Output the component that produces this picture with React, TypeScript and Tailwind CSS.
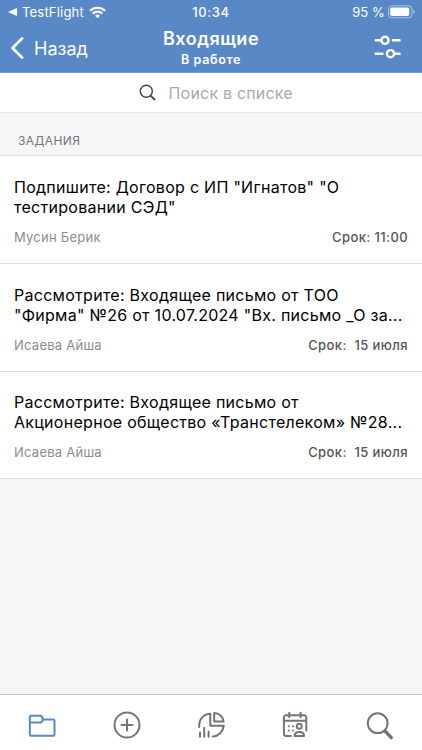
import { clsx } from 'clsx';

interface Task {
  lines: string[];
  author: string;
  due: string;
}

const tasks: Task[] = [
  { lines: ['Подпишите: Договор с ИП "Игнатов" "О', 'тестировании СЭД"'], author: 'Мусин Берик', due: 'Срок: 11:00' },
  { lines: ['Рассмотрите: Входящее письмо от ТОО', '"Фирма" №26 от 10.07.2024 "Вх. письмо _О за...'], author: 'Исаева Айша', due: 'Срок:  15 июля' },
  { lines: ['Рассмотрите: Входящее письмо от', 'Акционерное общество «Транстелеком» №28...'], author: 'Исаева Айша', due: 'Срок:  15 июля' },
];

function StatusBar() {
  return (
    <div className="grid h-6 grid-cols-[1fr_auto_1fr] items-center px-[7px] text-[13px] leading-6">
      <div className="flex items-center">
        <svg width="10" height="10" viewBox="0 0 10 10" fill="currentColor">
          <path d="M1 5 10 1v8z" />
        </svg>
        <span className="ml-[5px] tracking-[0.2px]">TestFlight</span>
        <svg className="ml-[5px]" width="17" height="13" viewBox="0 0 17 13" fill="none" stroke="currentColor" strokeWidth="2.2">
          <path d="M1 4.8a10.7 10.7 0 0 1 15 0M3.7 7.6a6.8 6.8 0 0 1 9.6 0" />
          <path d="M8.5 12.2 6 9.7a3.6 3.6 0 0 1 5 0z" fill="currentColor" stroke="none" />
        </svg>
      </div>
      <span className="font-medium tracking-[0.6px]">10:34</span>
      <div className="flex items-center justify-end gap-[3px]">
        <span className="tracking-[0.1px]">95 %</span>
        <svg width="27" height="14" viewBox="0 0 27 14" fill="none">
          <rect x="0.5" y="0.8" width="23.5" height="12" rx="3.5" stroke="#fff" strokeOpacity="0.5" />
          <rect x="2.2" y="2.5" width="19" height="8.6" rx="1.8" fill="#fff" />
          <path d="M25.2 5v4c.9-.3 1.4-1.1 1.4-2s-.5-1.7-1.4-2z" fill="#fff" fillOpacity="0.5" />
        </svg>
      </div>
    </div>
  );
}

function NavBar() {
  return (
    <div className="grid h-12 grid-cols-[1fr_auto_1fr] px-[10px]">
      <button className="flex h-12 items-center gap-[10px] text-[18px]">
        <svg width="14" height="22" viewBox="0 0 14 22" fill="none" stroke="currentColor" strokeWidth="2.7" strokeLinecap="round" strokeLinejoin="round">
          <path d="M12 1.5 2.5 11 12 20.5" />
        </svg>
        <span>Назад</span>
      </button>
      <div className="flex flex-col items-center pt-1">
        <h1 className="text-[18px] font-semibold leading-[22px] tracking-[0.5px]">Входящие</h1>
        <p className="mt-[2px] text-[12.5px] font-semibold leading-4 tracking-[0.65px]">В работе</p>
      </div>
      <button className="flex h-[46px] items-center justify-end pr-[10px]">
        <svg width="29" height="24" viewBox="0 0 29 24" fill="none" stroke="currentColor" strokeWidth="2.4" strokeLinecap="round">
          <circle cx="12" cy="5.3" r="3.6" />
          <path d="M2.8 5.3h5.500M20 5.3h6.600M2.8 18.7h6.700M21.500 18.7h5.100" />
          <circle cx="17.5" cy="18.7" r="3.6" />
        </svg>
      </button>
    </div>
  );
}

function TaskRow({ task }: { task: Task }) {
  return (
    <li className="flex h-[108px] flex-col border-b border-[#dfdfe2] bg-white px-[14px] pt-[22px] last:h-[107px] last:pt-[21px]">
      <div className="whitespace-nowrap text-[16px] leading-[19.5px] tracking-[0.28px] text-black">
        {task.lines.map(line => (
          <p key={line}>{line}</p>
        ))}
      </div>
      <div className="mt-3 flex justify-between text-[13px] leading-4">
        <span className="tracking-[0.25px] text-[#8c8c8c]">{task.author}</span>
        <span className="whitespace-pre font-medium tracking-[0.4px] text-[#555]">{task.due}</span>
      </div>
    </li>
  );
}

const tabs = [
  {
    label: 'Папки',
    icon: <path d="M2.8 23.4V6a1.3 1.3 0 0 1 1.3-1.3H14l1.6 1.8v2H26.2a1.3 1.3 0 0 1 1.3 1.3v13.6a1.3 1.3 0 0 1-1.3 1.3H4.100a1.3 1.3 0 0 1-1.3-1.3zM2.8 11.500H14l1.600-1.800V8.500" />,
  },
  {
    label: 'Создать',
    icon: <path d="M15 1.5a12.5 12.5 0 1 0 0 25a12.5 12.5 0 1 0 0-25zM15 8.5v11M9.5 14h11" />,
  },
  {
    label: 'Отчёты',
    icon: (
      <>
        <path d="M3.2 16V14A11.3 11.3 0 0 1 14.3 2.8V14.8H27.700A11.800 11.800 0 0 1 16.700 25.500" />
        <path d="M18.200 2V10.500H27.600A9.400 9.400 0 0 0 18.200 2z" />
        <path d="M4 21.500v4.300M8.200 17v8.800M12.600 20.500v5.300" />
      </>
    ),
  },
  {
    label: 'Календарь',
    icon: (
      <>
        <path d="M10.800 25H6a2.100 2.100 0 0 1-2.100-2.100V6.400A2.100 2.100 0 0 1 6 4.300h18.200a2.100 2.100 0 0 1 2.100 2.100V19.500M3.900 9.700h22.400M9.300 1.700v4.500M20.600 1.700v4.500" />
        <circle cx="19.300" cy="15.200" r="2.500" />
        <path d="M14.600 25c0-2.600 1.800-4 4.700-4s4.700 1.400 4.700 4z" />
        <path d="M8.700 15.200h.1M13 15.200h.1M8.700 19.500h.1M13 19.500h.1" />
      </>
    ),
  },
  {
    label: 'Поиск',
    icon: (
      <>
        <circle cx="12.7" cy="12.2" r="9.9" />
        <path d="m20.300 20.400 6 6.200" strokeWidth="3.500" />
      </>
    ),
  },
];

export default function App() {
  return (
    <div className="flex h-[750px] w-[422px] flex-col overflow-hidden bg-[#f5f6f8] font-['Inter',sans-serif]">
      <header className="h-[73px] shrink-0 border-b border-[#719bcf] bg-[#5988c6] text-white">
        <StatusBar />
        <NavBar />
      </header>

      <div className="flex h-10 shrink-0 items-center border-b border-[#e4e5e7] bg-white pl-[139px]">
        <svg width="17" height="17" viewBox="0 0 17 17" fill="none" stroke="#444" strokeWidth="1.4" strokeLinecap="round">
          <circle cx="7.3" cy="7.3" r="6" />
          <path d="m11.8 11.8 3.7 3.7" strokeWidth="1.8" />
        </svg>
        <span className="ml-[12.5px] text-[16px] tracking-[0.2px] text-[#aaa]">Поиск в списке</span>
      </div>

      <h2 className="h-[43px] shrink-0 border-b border-[#dfdfe2] pl-[18px] pt-5 text-[12px] leading-4 tracking-[0.4px] text-[#777]">ЗАДАНИЯ</h2>
      <ul>
        {tasks.map((task, i) => (
          <TaskRow key={i} task={task} />
        ))}
      </ul>

      {/* Tab bar */}
      <nav className="mt-auto grid h-14 shrink-0 grid-cols-5 border-t border-[#c4c4c8] bg-white">
        {tabs.map((tab, i) => (
          <button key={tab.label} aria-label={tab.label}
            className={clsx('flex justify-center pt-4', i === 0 ? 'text-[#5988c6]' : 'text-[#757575]')}>
            <svg width="30" height="30" viewBox="0 0 30 30" fill="none" stroke="currentColor" strokeWidth="2" strokeLinecap="round" strokeLinejoin="round">
              {tab.icon}
            </svg>
          </button>
        ))}
      </nav>
    </div>
  );
}
